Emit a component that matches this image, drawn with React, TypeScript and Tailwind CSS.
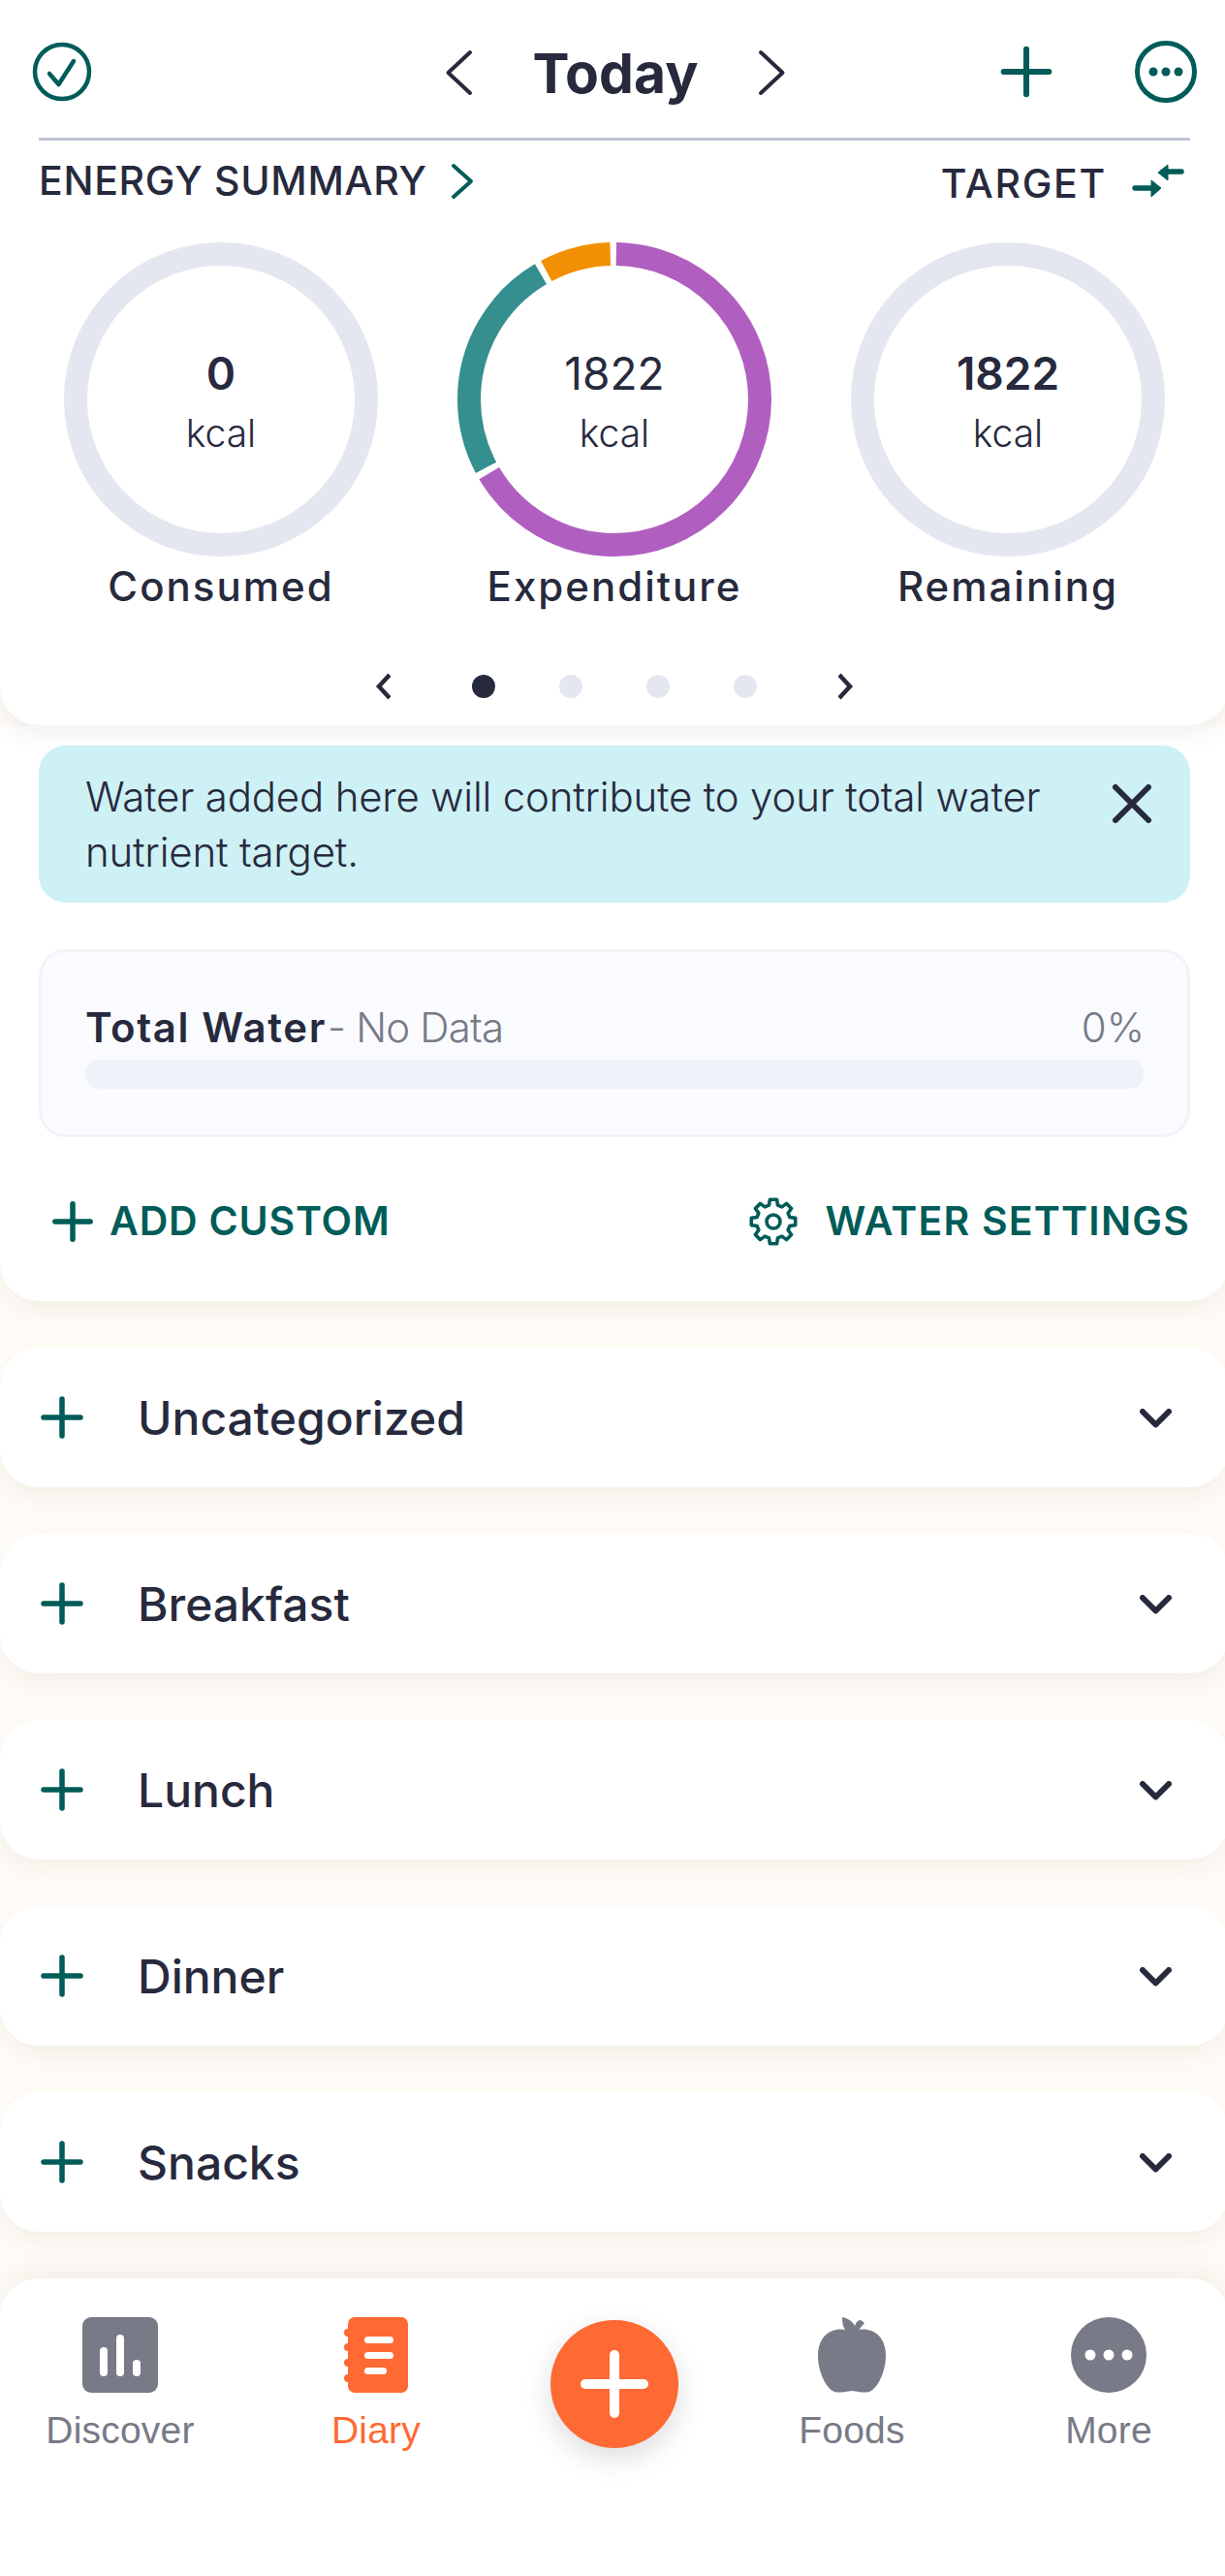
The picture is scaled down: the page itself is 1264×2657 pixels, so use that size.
import type { ReactNode } from "react";

const Inter = { fontFamily: "Inter, sans-serif" };

const gearPath = (() => {
  const cx = 25;
  const cy = 25;
  const pts: string[] = [];
  for (let i = 0; i < 8; i++) {
    const t = i * 45 - 90;
    const p = (r: number, a: number) => {
      const x = cx + r * Math.cos(((t + a) * Math.PI) / 180);
      const y = cy + r * Math.sin(((t + a) * Math.PI) / 180);
      return `${x.toFixed(2)} ${y.toFixed(2)}`;
    };
    pts.push(p(17.5, -15), p(23, -9), p(23, 9), p(17.5, 15));
  }
  return `M${pts.join("L")}Z`;
})();

function Ring({ value, label, colored, bold }: { value: string; label: string; colored?: boolean; bold?: boolean }) {
  const r = 150;
  const c = 2 * Math.PI * r;
  const segs = [
    { color: "#b05fc0", from: 0.002, to: 0.665 },
    { color: "#348f8e", from: 0.672, to: 0.915 },
    { color: "#f38f03", from: 0.922, to: 0.995 },
  ];
  return (
    <div className="w-[324px] flex flex-col items-center">
      <div className="relative w-[324px] h-[324px] flex flex-col items-center">
        <svg width="324" height="324" viewBox="0 0 324 324" className="absolute inset-0 -rotate-90">
          {colored ? (
            segs.map((s) => (
              <circle key={s.color} cx="162" cy="162" r={r} fill="none" stroke={s.color} strokeWidth="24" strokeDasharray={`${(s.to - s.from) * c} ${c}`} strokeDashoffset={-s.from * c} />
            ))
          ) : (
            <circle cx="162" cy="162" r={r} fill="none" stroke="#e4e7ef" strokeWidth="24" />
          )}
        </svg>
        <div className={`mt-[109px] text-[46px] leading-[52px] text-[#272a3d] ${bold ? "font-semibold" : "font-normal"}`}>{value}</div>
        <div className="mt-[13px] text-[39px] leading-[46px] font-light text-[#272a3d]">kcal</div>
      </div>
      <div className="mt-[5px] text-[42px] leading-[52px] font-medium tracking-[2px] text-[#272a3d] whitespace-nowrap">{label}</div>
    </div>
  );
}

function Plus({ size = 44, w = 5 }: { size?: number; w?: number }) {
  return (
    <svg width={size} height={size} viewBox="0 0 44 44" fill="none" stroke="#005c58" strokeWidth={(w * 44) / size} strokeLinecap="round">
      <path d="M22 3v38M3 22h38" />
    </svg>
  );
}

function Meal({ name }: { name: string }) {
  return (
    <div className="h-[144px] bg-white rounded-[40px] shadow-[0_12px_24px_rgba(60,40,10,0.06)] flex items-center pl-[42px] pr-[59px]">
      <Plus size={44} w={5.5} />
      <div className="ml-[56px] flex-1 text-[48px] leading-[60px] pt-[2px] font-medium text-[#272a3d]">{name}</div>
      <svg width="33" height="20" viewBox="0 0 33 20" fill="none" stroke="#272a3d" strokeWidth="6" strokeLinecap="round" strokeLinejoin="round" className="mt-[2px]">
        <path d="M3 3l13.5 13.5L30 3" />
      </svg>
    </div>
  );
}

function NavItem({ label, color, children, w }: { label: string; color: string; children: ReactNode; w: string }) {
  return (
    <div className={`flex flex-col items-center shrink-0 ${w}`}>
      <div className="h-[78px] flex items-center justify-center">{children}</div>
      <div className="mt-[17px] text-[39px] leading-[44px] tracking-[0.2px]" style={{ color, fontFamily: "'Liberation Sans', sans-serif" }}>{label}</div>
    </div>
  );
}

export default function App() {
  return (
    <div className="w-[1264px] h-[2657px] overflow-hidden bg-[#fffcf7]">
      <div className="w-[1268px] h-full flex flex-col text-[#272a3d]" style={Inter}>
        <div className="bg-white rounded-b-[40px] shadow-[0_12px_24px_rgba(0,0,0,0.05)] z-10 relative">
          <div className="h-[142px] pl-[32px] pr-[32px] pt-[6px] flex items-center justify-between relative">
            <svg width="64" height="64" viewBox="0 0 64 64" fill="none" stroke="#005c58" strokeWidth="4.5" strokeLinecap="round" strokeLinejoin="round">
              <circle cx="32" cy="32" r="28" />
              <path d="M19 34l9.5 11L44 21" />
            </svg>
            <div className="absolute left-[458px] top-[50px] flex items-center">
              <svg width="30" height="48" viewBox="0 0 30 48" fill="none" stroke="#272a3d" strokeWidth="4" strokeLinecap="round" strokeLinejoin="round">
                <path d="M27 3L4.5 24 27 45" />
              </svg>
              <div className="ml-[60px] w-[174px] text-center text-[57px] leading-[48px] font-bold mt-[2px]">Today</div>
              <svg width="30" height="48" viewBox="0 0 30 48" fill="none" stroke="#272a3d" strokeWidth="4" strokeLinecap="round" strokeLinejoin="round" className="ml-[60px]">
                <path d="M3 3l22.5 21L3 45" />
              </svg>
            </div>
            <div className="flex items-center">
              <Plus size={54} w={6} />
              <svg width="66" height="66" viewBox="0 0 66 66" fill="none" className="ml-[84px]">
                <circle cx="33" cy="33" r="29.5" stroke="#005c58" strokeWidth="5" />
                <circle cx="20" cy="33" r="4.5" fill="#005c58" />
                <circle cx="33" cy="33" r="4.5" fill="#005c58" />
                <circle cx="46" cy="33" r="4.5" fill="#005c58" />
              </svg>
            </div>
          </div>
          <div className="ml-[40px] mr-[40px] h-[3px] bg-[#c0c5d5]" />
          <div className="h-[105px] pl-[40px] pr-[40px] flex justify-between items-start">
            <div className="flex items-center h-[64px] mt-[10px]">
              <span className="text-[41px] font-medium tracking-[0.7px] whitespace-nowrap">ENERGY SUMMARY</span>
              <svg width="24" height="38" viewBox="0 0 24 38" fill="none" stroke="#005c58" strokeWidth="4" strokeLinecap="round" strokeLinejoin="round" className="ml-[24px]">
                <path d="M3 3l18 16L3 35" />
              </svg>
            </div>
            <div className="flex items-center h-[64px] mt-[13px]">
              <span className="text-[41px] font-medium tracking-[1.7px]">TARGET</span>
              <svg width="54" height="36" viewBox="0 0 54 36" fill="#005c58" stroke="#005c58" className="ml-[26px] mr-[6px] mt-[-6px]">
                <path d="M32 8h19" strokeWidth="5.5" strokeLinecap="round" fill="none" />
                <path d="M3 25h19" strokeWidth="5.5" strokeLinecap="round" fill="none" />
                <path d="M37 1L27 9l10 8z" strokeWidth="1" />
                <path d="M20 17l10 8-10 9z" strokeWidth="1" />
              </svg>
            </div>
          </div>
          <div className="px-[66px] flex justify-between">
            <Ring value="0" label="Consumed" bold />
            <Ring value="1822" label="Expenditure" colored />
            <Ring value="1822" label="Remaining" bold />
          </div>
          <div className="mt-[55px] h-[44px] flex items-center justify-center">
            <svg width="18" height="28" viewBox="0 0 18 28" fill="none" stroke="#272a3d" strokeWidth="4.5">
              <path d="M17 2L6 14l11 12" />
            </svg>
            <div className="w-[24px] h-[24px] rounded-full bg-[#272a3d] ml-[84px]" />
            <div className="w-[24px] h-[24px] rounded-full bg-[#e4e7ef] ml-[66px]" />
            <div className="w-[24px] h-[24px] rounded-full bg-[#e4e7ef] ml-[66px]" />
            <div className="w-[24px] h-[24px] rounded-full bg-[#e4e7ef] ml-[66px]" />
            <svg width="18" height="28" viewBox="0 0 18 28" fill="none" stroke="#272a3d" strokeWidth="4.5" className="ml-[84px]">
              <path d="M1 2l11 12L1 26" />
            </svg>
          </div>
          <div className="h-[18px]" />
        </div>

        <div className="bg-white rounded-b-[40px] shadow-[0_12px_24px_rgba(60,40,10,0.06)] px-[40px] pt-[21px] h-[594px] flex flex-col">
          <div className="h-[162px] bg-[#cdf1f5] rounded-[28px] pl-[48px] pr-[40px] flex items-start">
            <div className="flex-1 pt-[24px] text-[42px] leading-[57px] font-light text-[#272a3d] tracking-[-0.2px]">Water added here will contribute to your total water nutrient target.</div>
            <svg width="40" height="40" viewBox="0 0 40 40" fill="none" stroke="#272a3d" strokeWidth="6" strokeLinecap="round" className="mt-[40px] ml-[20px]">
              <path d="M3 3l34 34M37 3L3 37" />
            </svg>
          </div>
          <div className="mt-[48px] h-[194px] bg-[#fafbff] border-[3px] border-[#f1f3f9] rounded-[28px] px-[45px] pt-[49px]">
            <div className="flex justify-between items-center h-[56px]">
              <div className="text-[42px] whitespace-nowrap">
                <span className="font-semibold tracking-[1.6px]">Total Water</span>
                <span className="font-light text-[#787a87] ml-[1px] tracking-[-0.8px]">- No Data</span>
              </div>
              <span className="text-[42px] font-light text-[#787a87] mr-[-1px]">0%</span>
            </div>
            <div className="mt-[6px] h-[30px] rounded-[14px] bg-[#eff2f9]" />
          </div>
          <div className="flex-1 flex justify-between items-center pt-[5px]">
            <div className="flex items-center pl-[14px]">
              <Plus size={42} w={5.5} />
              <span className="ml-[17px] text-[41px] font-semibold text-[#005c58] tracking-[0.8px]">ADD CUSTOM</span>
            </div>
            <div className="flex items-center">
              <svg width="50" height="50" viewBox="0 0 50 50" fill="none" stroke="#005c58" strokeWidth="3.6" strokeLinecap="round" strokeLinejoin="round">
                <path d={gearPath} />
                <circle cx="25" cy="25" r="7" />
              </svg>
              <span className="ml-[28px] text-[41px] font-semibold tracking-[1.2px] text-[#005c58]">WATER SETTINGS</span>
            </div>
          </div>
        </div>

        <div className="mt-[48px] flex flex-col gap-[48px]">
          <Meal name="Uncategorized" />
          <Meal name="Breakfast" />
          <Meal name="Lunch" />
          <Meal name="Dinner" />
          <Meal name="Snacks" />
        </div>

        <div className="mt-[48px] flex-1 bg-white rounded-t-[40px] shadow-[0_-12px_24px_rgba(60,40,10,0.06)] pt-[40px] relative flex">
          <NavItem label="Discover" color="#787a87" w="w-[248px]">
            <svg width="78" height="78" viewBox="0 0 78 78">
              <rect width="78" height="78" rx="9" fill="#787a87" />
              <rect x="18" y="31" width="8" height="30" rx="4" fill="#fff" />
              <rect x="35" y="18" width="8" height="43" rx="4" fill="#fff" />
              <rect x="52" y="44" width="8" height="17" rx="4" fill="#fff" />
            </svg>
          </NavItem>
          <NavItem label="Diary" color="#ff6933" w="w-[280px]">
            <svg width="66" height="78" viewBox="0 0 66 78">
              <path d="M4 7a7 7 0 0 1 7-7h48a7 7 0 0 1 7 7v64a7 7 0 0 1-7 7H11a7 7 0 0 1-7-7z" fill="#ff6933" />
              <circle cx="4" cy="16" r="4" fill="#ff6933" />
              <circle cx="4" cy="31" r="4" fill="#ff6933" />
              <circle cx="4" cy="47" r="4" fill="#ff6933" />
              <circle cx="4" cy="63" r="4" fill="#ff6933" />
              <rect x="21" y="20" width="30" height="7" rx="3.5" fill="#fff" />
              <rect x="21" y="36" width="30" height="7" rx="3.5" fill="#fff" />
              <rect x="21" y="52" width="23" height="7" rx="3.5" fill="#fff" />
            </svg>
          </NavItem>
          <div className="absolute left-[568px] top-[43px] w-[132px] h-[132px] rounded-full bg-[#ff6933] shadow-[0_10px_30px_rgba(0,0,0,0.14)] flex items-center justify-center">
            <svg width="70" height="70" viewBox="0 0 70 70" fill="none" stroke="#fff" strokeWidth="10" strokeLinecap="round">
              <path d="M35 5v60M5 35h60" />
            </svg>
          </div>
          <NavItem label="Foods" color="#787a87" w="w-[264px] ml-[219px]">
            <svg width="70" height="78" viewBox="0 0 70 78" fill="#787a87">
              <path d="M35 15c-6-2-10-3-16-2C7 15 0 25 0 40c0 13 6 30 15 36 5 3 12 1 20 0 8 1 15 3 20 0 9-6 15-23 15-36 0-15-7-25-19-27-6-1-10 0-16 2z" />
              <path d="M25 0c8 2 11 5 13 9 1-3 3-6 6-6l4 3c-2 3-6 5-7 13h-6c0-4-3-3-6-5-3-3-4-8-4-14z" />
            </svg>
          </NavItem>
          <NavItem label="More" color="#787a87" w="w-[266px]">
            <svg width="78" height="78" viewBox="0 0 78 78">
              <circle cx="39" cy="39" r="39" fill="#787a87" />
              <circle cx="20" cy="39" r="5.5" fill="#fff" />
              <circle cx="39" cy="39" r="5.5" fill="#fff" />
              <circle cx="58" cy="39" r="5.5" fill="#fff" />
            </svg>
          </NavItem>
        </div>
      </div>
    </div>
  );
}
